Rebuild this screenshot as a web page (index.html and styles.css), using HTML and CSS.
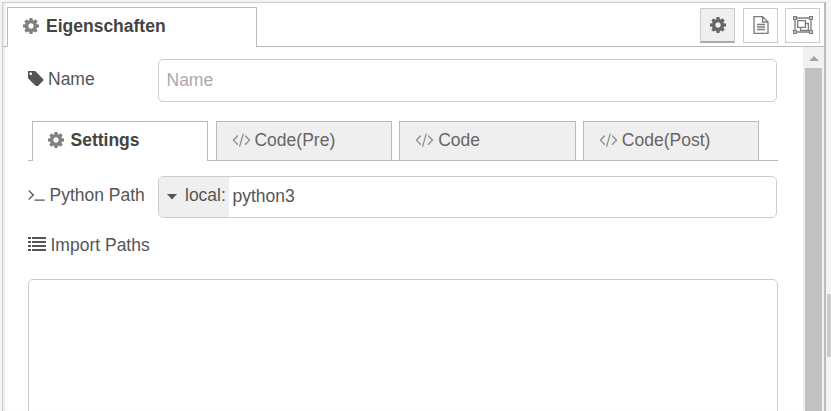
FILE: index.html
```html
<!DOCTYPE html>
<html lang="de">
<head>
<meta charset="utf-8">
<title>Eigenschaften</title>
<link rel="stylesheet" href="styles.css">
</head>
<body>
<svg class="defs" aria-hidden="true">
<symbol id="cog" viewBox="128 128 1536 1536"><path d="M1152 896q0-106-75-181t-181-75-181 75-75 181 75 181 181 75 181-75 75-181zm512-109v222q0 12-8 23t-20 13l-185 28q-19 54-39 91 35 50 107 138 10 12 10 25t-9 23q-27 37-99 108t-94 71q-12 0-26-9l-138-108q-44 23-91 38-16 136-29 186-7 28-36 28h-222q-14 0-24.500-8.500t-11.500-21.500l-28-184q-49-16-90-37l-141 107q-10 9-25 9-14 0-25-11-126-114-165-168-7-10-7-23 0-12 8-23 15-21 51-66.500t54-70.500q-27-50-41-99l-183-27q-13-2-21-12.500t-8-23.500v-222q0-12 8-23t19-13l186-28q14-46 39-92-40-57-107-138-10-12-10-24 0-10 9-23 26-36 98.500-107.500t94.500-71.500q13 0 26 10l138 107q44-23 91-38 16-136 29-186 7-28 36-28h222q14 0 24.500 8.500t11.500 21.500l28 184q49 16 90 37l142-107q9-9 24-9 13 0 25 10 129 119 165 170 7 8 7 22 0 12-8 23-15 21-51 66.500t-54 70.500q26 50 41 98l183 28q13 2 21 12.500t8 23.500z"/></symbol>
<symbol id="code" viewBox="-9 128 1820 1536"><path d="M553 1399l-50 50q-10 10-23 10t-23-10l-466-466q-10-10-10-23t10-23l466-466q10-10 23-10t23 10l50 50q10 10 10 23t-10 23l-393 393 393 393q10 10 10 23t-10 23zm591-1067l-373 1291q-4 13-15.500 19.500t-23.500 2.500l-62-17q-13-4-19.500-15.500t-2.500-24.500l373-1291q4-13 15.500-19.500t23.500-2.500l62 17q13 4 19.500 15.500t2.500 24.500zm657 651l-466 466q-10 10-23 10t-23-10l-50-50q-10-10-10-23t10-23l393-393-393-393q-10-10-10-23t10-23l50-50q10-10 23-10t23 10l466 466q10 10 10 23t-10 23z"/></symbol>
</svg>
<div class="workspace">
  <main class="panel">
    <header class="tray-tabs">
      <div class="tray-tab"><svg class="cog"><use href="#cog"/></svg><span>Eigenschaften</span></div>
      <nav class="buttons">
        <button class="button active" aria-label="Eigenschaften"><svg class="cog"><use href="#cog"/></svg></button>
        <button class="button" aria-label="Beschreibung"><svg class="doc" viewBox="0 0 16 18"><path d="M1 .6h8.500L15 6v11.400H1zM9.500 1v5H15M4 8.500h8M4 11h8M4 13.500h8"/></svg></button>
        <button class="button" aria-label="Darstellung"><svg class="group" viewBox="0 0 20 18"><path d="M3.500 2h13M3.500 16h13M2 3.500v11M18 3.500v11M.6.6h2.800v2.800H.6zM16.600.6h2.800v2.800h-2.800zM.6 14.600h2.800v2.800H.6zM16.600 14.600h2.800v2.800h-2.800zM4.600 4.600h7.800v6.800H4.600zM12.400 7.500h3v6.800H7.600v-2.900"/></svg></button>
      </nav>
    </header>
    <div class="body">
      <form class="form">
        <div class="row name-row">
          <label><svg class="tag" viewBox="192 192 1451 1451"><path d="M576 448q0-53-37.500-90.500t-90.500-37.500-90.500 37.500-37.500 90.500 37.500 90.500 90.500 37.500 90.500-37.500 37.500-90.500zm1067 576q0 53-37 90l-491 492q-39 37-91 37-53 0-90-37l-715-716q-38-37-64.500-101t-26.500-117v-416q0-52 38-90t90-38h416q53 0 117 26.500t102 64.500l715 714q37 39 37 91z"/></svg><span>Name</span></label>
          <div class="field name-field"><span class="placeholder">Name</span></div>
        </div>
        <div class="tabs">
          <div class="tab selected"><svg class="cog"><use href="#cog"/></svg><span>Settings</span></div>
          <div class="tab"><svg class="code"><use href="#code"/></svg><span>Code(Pre)</span></div>
          <div class="tab"><svg class="code"><use href="#code"/></svg><span>Code</span></div>
          <div class="tab"><svg class="code"><use href="#code"/></svg><span>Code(Post)</span></div>
        </div>
        <div class="row python-row">
          <label><svg class="terminal" viewBox="77 256 1651 1408"><path d="M649 983l-466 466q-10 10-23 10t-23-10l-50-50q-10-10-10-23t10-23l393-393-393-393q-10-10-10-23t10-23l50-50q10-10 23-10t23 10l466 466q10 10 10 23t-10 23zm1079 457v64q0 14-9 23t-23 9h-960q-14 0-23-9t-9-23v-64q0-14 9-23t23-9h960q14 0 23 9t9 23z"/></svg><span>Python Path</span></label>
          <div class="field typed"><span class="type"><i class="caret"></i><span>local:</span></span><span class="value">python3</span></div>
        </div>
        <div class="import-row"><svg class="list" viewBox="0 0 18 14"><path d="M0 0h3v2H0zM4 0h14v2H4zM0 4h3v2H0zM4 4h14v2H4zM0 8h3v2H0zM4 8h14v2H4zM0 12h3v2H0zM4 12h14v2H4z"/></svg><span>Import Paths</span></div>
        <div class="paths"></div>
      </form>
      <div class="scrollbar"><i class="up"></i><div class="thumb"></div></div>
    </div>
  </main>
  <aside class="separator"><div class="grip"></div></aside>
</div>
</body>
</html>
```
FILE: styles.css
```css
* { box-sizing: border-box; }
body { margin: 0; height: 411px; overflow: hidden; background: #f3f3f3; color: #555; font: 17.5px/25px "Liberation Sans", Arial, sans-serif; }
.defs { display: none; }
svg { display: block; flex: none; fill: currentColor; }
.workspace { display: flex; height: 411px; padding: 2px 0 0 2px; }
.panel { width: 824px; display: flex; flex-direction: column; background: #fff; border: solid #ccc; border-width: 1px 2px 0 1px; border-right-color: #bbb; box-shadow: inset 4px 0 4px -3px #ddd; }
.tray-tabs { display: flex; justify-content: space-between; height: 44px; padding: 4px 4px 0; border-bottom: 1px solid #bbb; flex: none; }
.tray-tab { display: flex; align-items: center; width: 250px; height: 40px; padding: 0 0 3px 15px; border: 1px solid #bbb; border-bottom: 0; background: #fff; color: #444; font-weight: bold; }
.tray-tab .cog { margin: 0 7px 1px 0; }
.cog { width: 16px; height: 16px; color: #808080; }
.buttons { display: flex; gap: 7.500px; padding-top: 1px; }
.button { display: flex; align-items: center; justify-content: center; width: 35px; height: 35px; padding: 0; border: 1px solid #ccc; background: #fff; color: #7d7d7d; }
.button.active { background: #efefef; border-bottom: 2px solid #aaa; }
.button.active .cog { color: #666; margin-bottom: 1px; }
.doc { width: 16px; height: 18px; margin: 0 0 2px 1px; }
.group { width: 20px; height: 18px; margin-bottom: 2px; }
.doc path, .group path { fill: none; stroke: currentColor; stroke-width: 1.35; }
.body { display: flex; flex: 1; min-height: 0; }
.form { width: 800px; padding: 12px 25px 0; flex: none; overflow: hidden; }
.row { display: flex; }
.row label { display: flex; width: 130px; align-items: center; height: 25px; flex: none; }
.name-row label { margin-top: 8px; }
.tag { width: 15.500px; height: 15.500px; margin: 0 4.500px 2px 0; }
.field { width: 619px; border: 1px solid #ccc; border-radius: 5px; background: #fff; }
.name-field { height: 43px; padding: 8px 7.500px; }
.placeholder { color: #aaa; }
.tabs { display: flex; gap: 7.500px; height: 40px; margin-top: 19px; padding-left: 4px; width: 750px; border-bottom: 1px solid #bbb; }
.tab { display: flex; align-items: center; width: 176.200px; height: 39px; padding: 0 0 2px 15px; border: 1px solid #bbb; border-bottom: 0; background: #efefef; color: #666; }
.tab .code { width: 19px; height: 15px; margin: 0 3.800px 1px 0; color: #8c8c8c; }
.tab.selected { height: 40px; background: #fff; color: #444; font-weight: bold; }
.tab.selected .cog { margin: 0 6.500px 2px 0; }
.python-row { margin-top: 15px; }
.python-row label { margin-top: 7px; }
.terminal { width: 17px; height: 14px; margin: 0 4.500px 1px 0; }
.typed { display: flex; height: 42px; overflow: hidden; }
.type { display: flex; align-items: center; width: 70px; padding: 0 0 3px 7.500px; background: #efefef; white-space: nowrap; }
.caret { width: 11px; height: 6px; margin: 2px 7.500px 0 0; background: #555; clip-path: polygon(0 0, 100% 0, 50% 100%); }
.value { padding: 7px 3.500px; }
.import-row { display: flex; align-items: center; height: 25px; margin-top: 15px; }
.list { width: 18px; height: 14px; margin: 0 4.500px 3px 0; }
.paths { width: 750px; height: 200px; margin-top: 21px; border: 1px solid #ccc; border-radius: 5px; }
.scrollbar { width: 21px; background: #f1f1f1; display: flex; flex-direction: column; padding: 9px 2px 0; }
.up { align-self: center; border: 5px solid transparent; border-top: 0; border-bottom: 5px solid #a3a3a3; }
.thumb { flex: 1; margin-top: 7px; background: #c1c1c1; }
.separator { width: 5px; background: #f3f3f3; padding-left: 1px; }
.grip { height: 63px; margin-top: 292px; background: #ccc; }
```
